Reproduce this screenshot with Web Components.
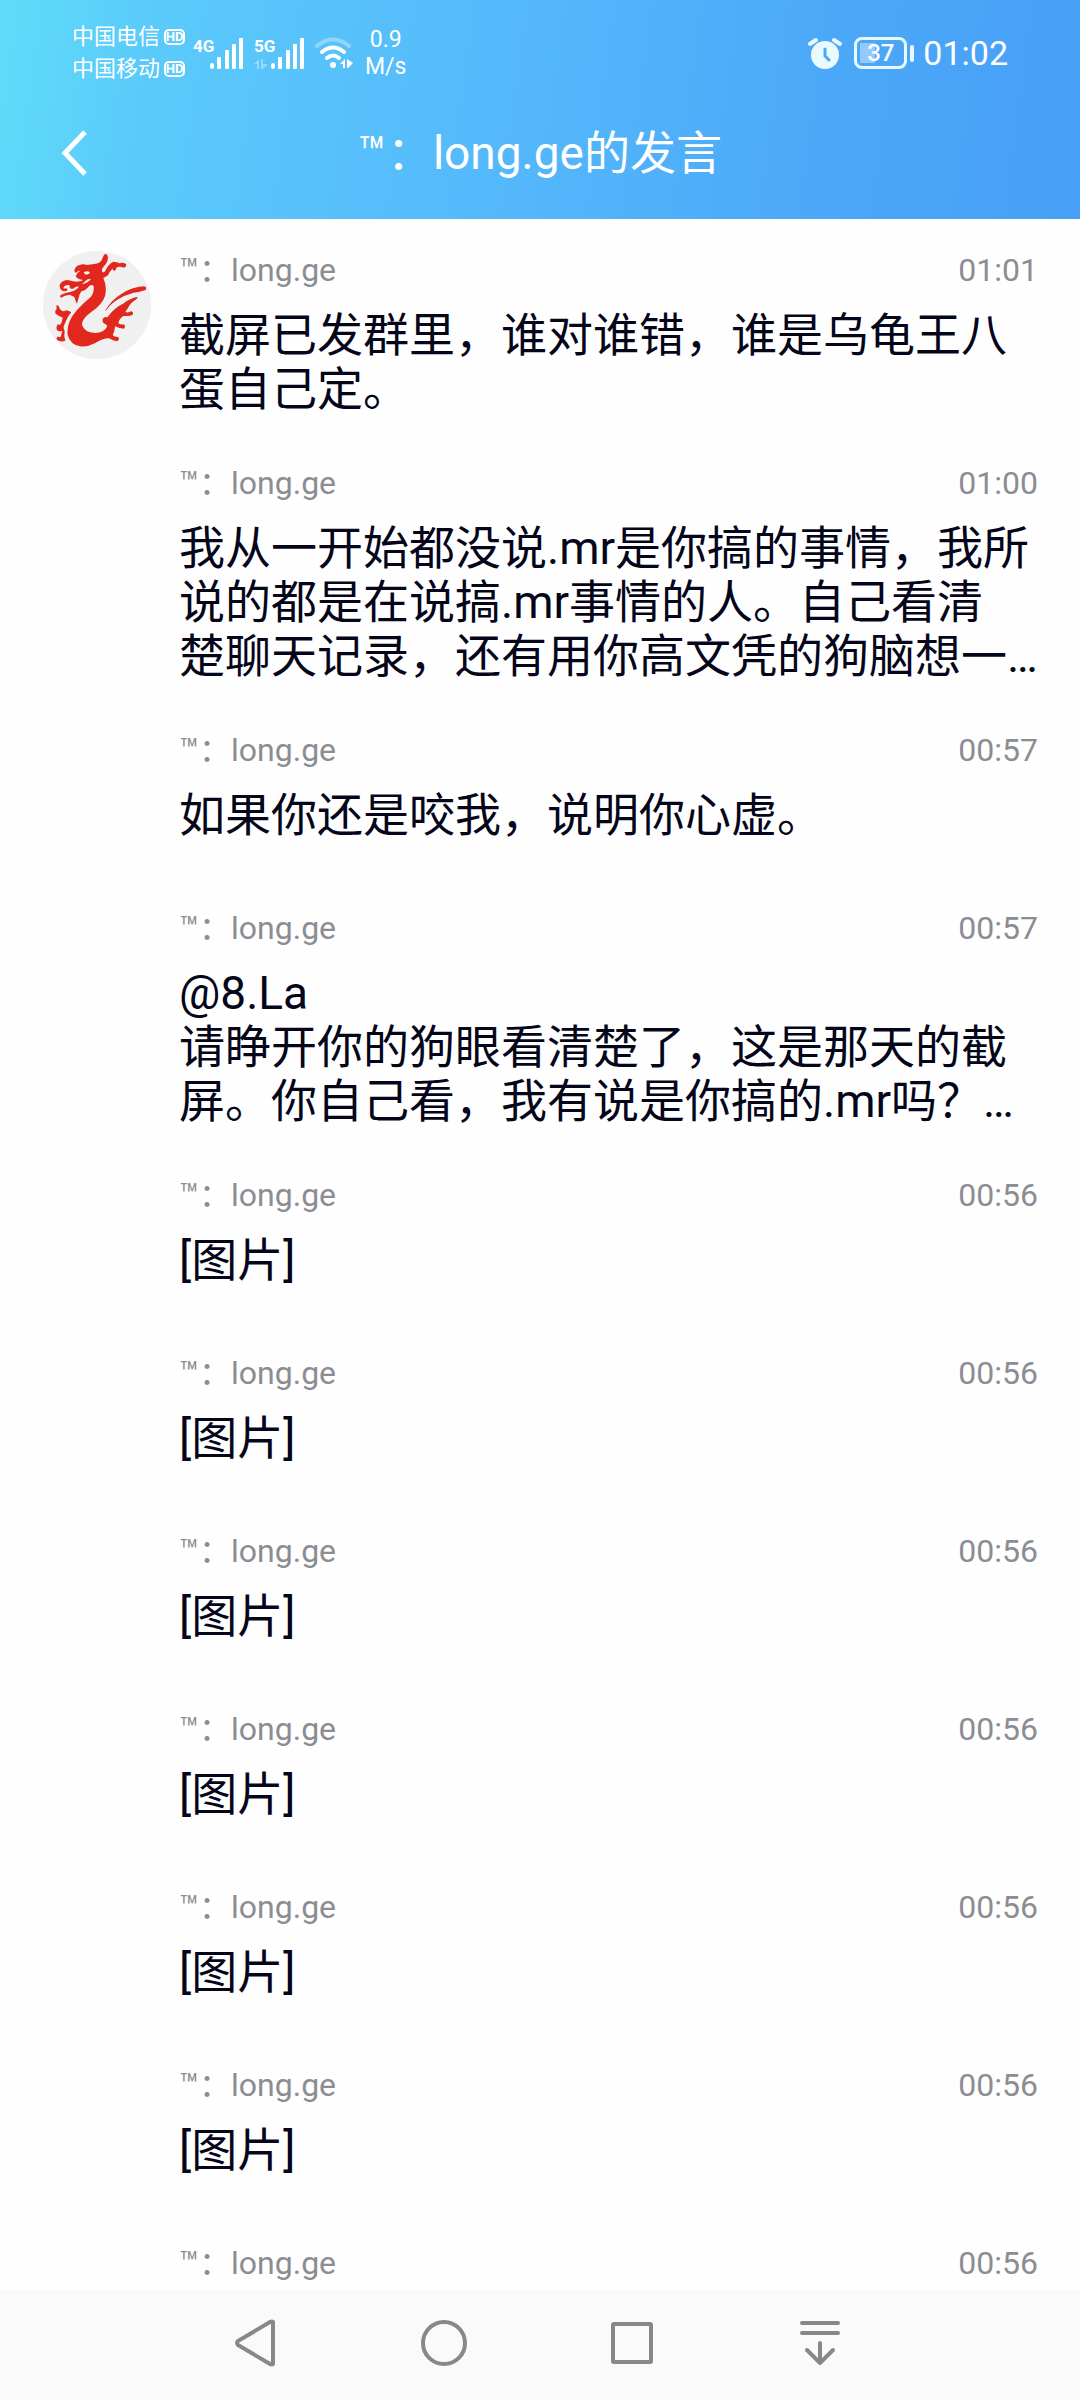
<!DOCTYPE html>
<html lang="zh-CN">
<head>
<meta charset="utf-8">
<meta name="viewport" content="width=device-width">
<title>long.ge的发言</title>
<style>
  html, body { margin: 0; height: 100%; background: #fefefe; }
  body { font-family: Roboto, "Noto Sans CJK SC", sans-serif; color: #05061a; }
</style>
</head>
<body>
<chat-app></chat-app>
<script>
const define = (name, html, setup) => {
  const tpl = document.createElement('template');
  tpl.innerHTML = html;
  customElements.define(name, class extends HTMLElement {
    constructor() {
      super();
      this.attachShadow({ mode: 'open' }).append(tpl.content.cloneNode(true));
    }
    connectedCallback() { if (setup) setup(this, this.shadowRoot); }
  });
};

define('signal-bars', `
  <style>
    :host { display: flex; align-items: flex-start; }
    .net { display: flex; flex-direction: column; width: 17px; height: 31px; justify-content: space-between; }
    b { font: 700 17px/16px "Liberation Sans Narrow", Roboto, sans-serif; }
    :host(:not([data])) .data { visibility: hidden; }
    svg { display: block; }
  </style>
  <div class="net"><b><slot></slot></b>
    <svg class="data" width="15" height="10" viewBox="0 0 15 10" fill="#fff" opacity=".35"><path d="M0 5L5 0V10H3V5ZM7 0H9V5H14L9 10H7Z"/></svg>
  </div>
  <svg width="34" height="31" viewBox="0 0 34 31" fill="#fff">
    <rect x="0" y="25" width="4" height="6" rx="2"/><rect x="7" y="19" width="4" height="12" rx="1"/>
    <rect x="15" y="12" width="4" height="19" rx="1"/><rect x="22" y="6" width="4" height="25" rx="1"/>
    <rect x="29" y="0" width="4" height="31" rx="1"/>
  </svg>`);

define('carrier-name', `
  <style>
    :host { display: flex; align-items: center; gap: 4px; font-size: 22px; line-height: 32px; }
    .hd { font: 700 13px/12px "Liberation Sans Narrow", Roboto, sans-serif; border: 2px solid #fff; border-radius: 5px; height: 12px; width: 17px; display: flex; justify-content: center; align-items: center; }
  </style>
  <slot></slot><span class="hd">HD</span>`);

define('battery-level', `
  <style>
    :host { display: flex; align-items: center; gap: 3px; }
    .cell { box-sizing: border-box; width: 53px; height: 32px; border: 3px solid #e9faff; border-radius: 8px; padding: 3px;
      display: flex; align-items: center; justify-content: center; font-weight: 500; font-size: 24px; line-height: 24px;
      background: linear-gradient(90deg, #fff6, #fff6) 3px 3px / 15px 20px no-repeat; }
    .nub { width: 4px; height: 17px; border-radius: 2px; background: #e9faff; }
  </style>
  <span class="cell"><slot></slot></span><span class="nub"></span>`);

define('status-bar', `
  <style>
    :host { display: flex; align-items: center; justify-content: space-between; height: 106px; padding: 0 72px 0 72px; color: #fff; box-sizing: border-box; }
    .left, .right { display: flex; align-items: center; }
    .carriers { margin-right: 8px; }
    signal-bars + signal-bars { margin-left: 10px; }
    .wifi { margin: 0 12px 0 10px; }
    .speed { font-size: 23px; line-height: 27px; text-align: center; }
    .clock { font-size: 34px; line-height: 40px; margin-left: 9px; }
    .alarm { margin-right: 12px; }
    svg { display: block; }
  </style>
  <div class="left">
    <div class="carriers"><carrier-name>中国电信</carrier-name><carrier-name>中国移动</carrier-name></div>
    <signal-bars>4G</signal-bars>
    <signal-bars data>5G</signal-bars>
    <svg class="wifi" width="38" height="32" viewBox="0 0 38 32" fill="none" stroke="#fff" stroke-width="4" stroke-linecap="round">
      <path d="M2 9Q18 -4 34 9" opacity=".35"/><path d="M7 15Q18 6 29 15"/><path d="M12 21Q18 16 24 21"/>
      <circle cx="18" cy="28" r="3" fill="#fff" stroke="none"/>
      <path d="M25 27L30 22V31H28V27ZM32 22L38 26L33 31H32Z" fill="#fff" stroke="none"/>
    </svg>
    <div class="speed">0.9<br>M/s</div>
  </div>
  <div class="right">
    <svg class="alarm" width="34" height="32" viewBox="0 0 34 32" fill="none" stroke="#e9faff" stroke-width="4" stroke-linecap="round">
      <circle cx="17" cy="18" r="14" fill="#e9faff" stroke="none"/><path d="M2 7L8 3M32 7L26 3"/>
      <path d="M17 12V19L21 23" stroke="#4ba6f8" stroke-width="3"/>
    </svg>
    <battery-level>37</battery-level>
    <span class="clock">01:02</span>
  </div>`);

define('title-bar', `
  <style>
    :host { display: grid; grid-template-columns: 120px 1fr 120px; align-items: center; height: 113px; padding-bottom: 20px; box-sizing: border-box; color: #fff; }
    button { all: unset; display: block; padding-left: 61px; cursor: pointer; }
    svg { display: block; }
    h1 { margin: 0; font-size: 46px; font-weight: 400; line-height: 60px; text-align: center; white-space: nowrap; }
  </style>
  <button aria-label="返回"><svg width="27" height="48" viewBox="0 0 27 48" fill="none" stroke="#fff" stroke-width="5"><path d="M24 3L4 24L24 45"/></svg></button>
  <h1><slot></slot></h1>`);

define('dragon-avatar', `
  <style>:host { display: block; } svg { display: block; width: 100%; }</style>
  <svg viewBox="24 18 324 324" fill="#e2281c">
    <circle cx="186" cy="180" r="162" fill="#f0f0f1"/>
    <path d="M207 29Q215 23 218 33Q221 50 208 62Q199 70 201 79Q206 87 212 76Q219 58 235 50Q247 50 253 55Q263 51 273 57Q276 66 266 68Q252 63 244 68Q243 78 236 77L232 71Q224 79 219 91Q211 96 205 99Q217 126 210 153Q202 179 169 201Q139 222 141 240Q149 263 180 264Q208 263 216 245Q217 240 211 237Q201 235 203 222Q208 213 217 217L222 211Q241 186 264 176Q287 159 306 156Q311 159 302 164Q286 173 279 189L271 201Q279 204 288 199Q297 201 293 209Q286 214 265 213Q252 222 250 235Q258 240 267 238Q273 245 267 251Q254 251 240 244Q240 256 233 271Q240 277 250 276Q255 284 246 289Q234 287 222 280Q202 280 181 294Q157 307 135 304Q106 299 98 270Q93 233 124 197Q145 174 167 156Q178 143 176 124Q171 116 162 124Q151 138 140 138L134 148L126 176Q120 166 118 156L104 149Q89 151 78 158Q73 156 77 150Q92 143 105 141Q123 137 132 125Q125 123 120 127Q116 133 108 131Q101 127 105 122Q99 117 88 124Q84 128 87 131Q94 127 98 134Q94 140 84 138Q73 133 74 120Q79 107 97 105L123 110Q137 110 145 105Q127 103 122 94Q128 80 136 79Q130 75 127 81Q121 86 118 78Q119 64 134 60Q145 55 155 60L178 57Q195 56 200 45Z"/>
    <path d="M211 196Q230 164 260 146Q290 127 327 124Q337 126 332 135Q313 141 296 143Q269 150 247 164Q226 177 213 197Z"/>
    <path d="M64 182Q70 177 75 193Q84 203 93 196Q103 198 109 202Q100 211 94 226L88 239Q83 247 89 258Q86 272 91 287Q79 292 67 286Q62 280 67 275L77 276L82 257Q72 262 65 254Q63 240 70 238Q75 244 80 232L83 218Q74 215 62 206Q58 197 65 193Z"/>
    <path d="M146 82Q158 75 165 83Q157 91 150 88Z" fill="#f0f0f1"/>
    <path d="M151 108Q160 99 168 103Q157 115 141 118Z" fill="#f0f0f1"/>
  </svg>`);

define('chat-message', `
  <style>
    :host { display: grid; grid-template-columns: 108px 1fr; column-gap: 28px; align-items: start; box-sizing: border-box; min-height: 178px; padding: 32px 40px 16px 43px; }
    .meta { display: flex; justify-content: space-between; color: #8b8d92; font-size: 32px; line-height: 36px; margin: 1px 2px 20px 0; }
    .text { font-size: 46px; line-height: 54px; }
    .body { min-width: 0; }
  </style>
  <div><slot name="avatar"></slot></div>
  <div class="body">
    <div class="meta"><span></span><time></time></div>
    <div class="text"><slot></slot></div>
  </div>`,
  (el, root) => {
    root.querySelector('.meta span').textContent = '™：' + el.getAttribute('sender');
    root.querySelector('time').textContent = el.getAttribute('time');
  });

define('nav-bar', `
  <style>
    :host { display: flex; justify-content: center; align-items: center; height: 110px; padding: 0 4px 4px 0; box-sizing: border-box; background: #fafafa; }
    button { all: unset; flex: 0 0 17.5%; display: flex; justify-content: center; cursor: pointer; }
    svg { display: block; fill: none; stroke: #888; stroke-width: 4; stroke-linejoin: round; stroke-linecap: round; }
  </style>
  <button aria-label="返回"><svg width="48" height="48" viewBox="0 0 48 48"><path d="M41 3V45Q40 46 38 45L6 26Q4 24 6 22L38 3Q40 2 41 3Z"/></svg></button>
  <button aria-label="主页"><svg width="48" height="48" viewBox="0 0 48 48"><circle cx="24" cy="24" r="21"/></svg></button>
  <button aria-label="最近任务"><svg width="48" height="48" viewBox="0 0 48 48"><rect x="5" y="5" width="38" height="38" rx="1"/></svg></button>
  <button aria-label="下拉通知"><svg width="48" height="48" viewBox="0 0 48 48"><path d="M6 4H42M6 14H42M24 24V44M11 31L24 44L37 31"/></svg></button>`);

define('chat-app', `
  <style>
    :host { display: flex; flex-direction: column; height: 100vh; overflow: hidden; }
    header { flex: none; background: linear-gradient(98deg, #60dcf8 0%, #5acafb 14%, #54b8fb 48%, #4ba8f8 76%, #489ff7 100%); }
    main { flex: 1; min-height: 0; overflow: hidden; }
    nav-bar { flex: none; }
  </style>
  <header><status-bar></status-bar><title-bar>™：long.ge的发言</title-bar></header>
  <main>
    <chat-message sender="long.ge" time="01:01"><dragon-avatar slot="avatar"></dragon-avatar>截屏已发群里，谁对谁错，谁是乌龟王八<br>蛋自己定。</chat-message>
    <chat-message sender="long.ge" time="01:00">我从一开始都没说.mr是你搞的事情，我所<br>说的都是在说搞.mr事情的人。自己看清<br>楚聊天记录，还有用你高文凭的狗脑想一…</chat-message>
    <chat-message sender="long.ge" time="00:57">如果你还是咬我，说明你心虚。</chat-message>
    <chat-message sender="long.ge" time="00:57">@8.La<br>请睁开你的狗眼看清楚了，这是那天的截<br>屏。你自己看，我有说是你搞的.mr吗？…</chat-message>
    <chat-message sender="long.ge" time="00:56">[图片]</chat-message>
    <chat-message sender="long.ge" time="00:56">[图片]</chat-message>
    <chat-message sender="long.ge" time="00:56">[图片]</chat-message>
    <chat-message sender="long.ge" time="00:56">[图片]</chat-message>
    <chat-message sender="long.ge" time="00:56">[图片]</chat-message>
    <chat-message sender="long.ge" time="00:56">[图片]</chat-message>
    <chat-message sender="long.ge" time="00:56"></chat-message>
  </main>
  <nav-bar></nav-bar>`);
</script>
</body>
</html>
